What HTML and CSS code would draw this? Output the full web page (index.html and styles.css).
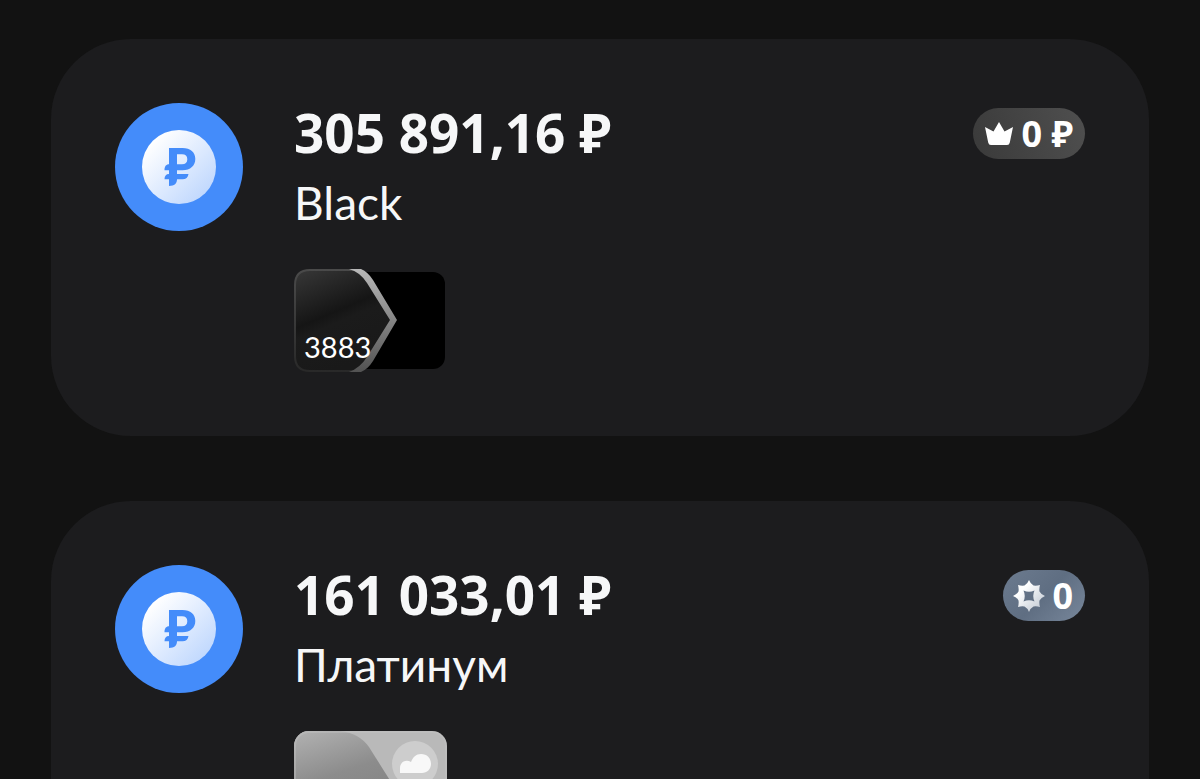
FILE: index.html
```
<!DOCTYPE html>
<html lang="ru">
<head>
    <meta charset="UTF-8">
    <meta name="viewport" content="width=device-width, initial-scale=1">
    <title>Счета</title>
    <link rel="stylesheet" href="styles.css">
</head>
<body>
    <main class="accounts">
        <!-- Black -->
        <section class="account">
            <svg class="account-icon" viewBox="0 0 128 128" aria-hidden="true">
                <defs>
                    <linearGradient id="coin" x1="0" y1="0" x2="1" y2="1">
                        <stop offset="0.15" stop-color="#ffffff"></stop>
                        <stop offset="1" stop-color="#b5d1fd"></stop>
                    </linearGradient>
                </defs>
                <circle cx="64" cy="64" r="64" fill="#448cfa"></circle>
                <circle cx="64" cy="64" r="37" fill="url(#coin)"></circle>
                <path fill="#448cfa" fill-rule="evenodd" d="M54 45H67.500C75.500 45 80.300 49.300 80.300 56C80.300 62.700 75.500 67.200 67.500 67.200H62V71H73.500C73 74.500 71 76.300 67.500 76.300H62C62 80.500 59.500 83 54 83V76.300H49.500C49.500 73 51 71 54 71V67.200H49.500C49.500 63.500 51 61.300 54 61.300ZM62 51.300V61.300H67C70.500 61.300 72.300 59.500 72.300 56.300C72.300 53 70.500 51.300 67 51.300Z"></path>
            </svg>
            <div class="account-info">
                <h2 class="amount">305 891,16 ₽</h2>
                <p class="name">Black</p>
                <div class="bank-card">
                    <svg viewBox="0 0 153 103" aria-hidden="true">
                        <defs>
                            <linearGradient id="black-face" x1="0" y1="0" x2="0.4" y2="1">
                                <stop offset="0" stop-color="#383838"></stop>
                                <stop offset="0.5" stop-color="#151515"></stop>
                                <stop offset="0.6" stop-color="#1b1b1b"></stop>
                                <stop offset="1" stop-color="#191919"></stop>
                            </linearGradient>
                            <linearGradient id="black-edge" x1="0" y1="0" x2="0" y2="1">
                                <stop offset="0" stop-color="#b8b8b8"></stop>
                                <stop offset="0.5" stop-color="#858585"></stop>
                                <stop offset="1" stop-color="#525252"></stop>
                            </linearGradient>
                            <linearGradient id="black-rim" x1="0" y1="0" x2="0" y2="1">
                                <stop offset="0" stop-color="#4a4a4a"></stop>
                                <stop offset="1" stop-color="#292929"></stop>
                            </linearGradient>
                        </defs>
                        <rect x="3" y="3" width="148" height="97" rx="12" fill="#000000"></rect>
                        <path fill="url(#black-face)" d="M16 1H58Q68 3 75 14L97 51L75 88Q68 100 58 102H16Q1 102 1 87V16Q1 1 16 1Z"></path>
                        <path fill="none" stroke="url(#black-rim)" stroke-width="2" d="M60 1H16Q1 1 1 16V87Q1 102 16 102H60"></path>
                        <path fill="url(#black-edge)" d="M55 0H67Q74 3 79 11L103 51L79 92Q74 100 67 103H55Q66 99 73 88L96 51L73 14Q66 3 55 0Z"></path>
                    </svg>
                    <span class="card-number">3883</span>
                </div>
            </div>
            <div class="badge badge-cashback">
                <svg class="badge-crown" viewBox="0 0 28 23" aria-hidden="true">
                    <path fill="#ffffff" d="M0 5L8.500 9.500L14 0L19.500 9.500L28 5L24.800 20.500Q24.300 23 22 23H6Q3.700 23 3.200 20.500Z"></path>
                </svg>
                <span>0 ₽</span>
            </div>
        </section>

        <!-- Platinum -->
        <section class="account">
            <svg class="account-icon" viewBox="0 0 128 128" aria-hidden="true">
                <circle cx="64" cy="64" r="64" fill="#448cfa"></circle>
                <circle cx="64" cy="64" r="37" fill="url(#coin)"></circle>
                <path fill="#448cfa" fill-rule="evenodd" d="M54 45H67.500C75.500 45 80.300 49.300 80.300 56C80.300 62.700 75.500 67.200 67.500 67.200H62V71H73.500C73 74.500 71 76.300 67.500 76.300H62C62 80.500 59.500 83 54 83V76.300H49.500C49.500 73 51 71 54 71V67.200H49.500C49.500 63.500 51 61.300 54 61.300ZM62 51.300V61.300H67C70.500 61.300 72.300 59.500 72.300 56.300C72.300 53 70.500 51.300 67 51.300Z"></path>
            </svg>
            <div class="account-info">
                <h2 class="amount">161 033,01 ₽</h2>
                <p class="name">Платинум</p>
                <div class="bank-card">
                    <svg viewBox="0 0 153 103" aria-hidden="true">
                        <defs>
                            <linearGradient id="platinum-face" x1="0" y1="0" x2="0.3" y2="1">
                                <stop offset="0" stop-color="#b2b2b2"></stop>
                                <stop offset="0.5" stop-color="#8c8c8c"></stop>
                                <stop offset="1" stop-color="#808080"></stop>
                            </linearGradient>
                            <clipPath id="platinum-shape">
                                <rect width="153" height="103" rx="15"></rect>
                            </clipPath>
                        </defs>
                        <g clip-path="url(#platinum-shape)">
                            <rect width="153" height="103" fill="#b9b9b9"></rect>
                            <path fill="url(#platinum-face)" d="M0 0H46Q65 2 75 16L97 51L75 87Q65 101 46 103H0Z"></path>
                        </g>
                        <rect x="1" y="1" width="151" height="101" rx="14" fill="none" stroke="#c4c4c4" stroke-opacity="0.4" stroke-width="2"></rect>
                        <circle cx="121" cy="33" r="23" fill="#cdcdcd"></circle>
                        <path fill="#f8f8f8" d="M106 42V37C106 31 112 28 117 31C119 26 122 23 127 23C133 23 137 27 137 33C137 38 133 42 128 42Z"></path>
                    </svg>
                </div>
            </div>
            <div class="badge badge-points">
                <svg class="badge-star" viewBox="0 0 32 32" aria-hidden="true">
                    <defs>
                        <linearGradient id="star" x1="0" y1="0" x2="1" y2="1">
                            <stop offset="0.3" stop-color="#ffffff"></stop>
                            <stop offset="1" stop-color="#b9c1cc"></stop>
                        </linearGradient>
                    </defs>
                    <path fill="url(#star)" fill-rule="evenodd" d="M16 0Q17.500 4 20.500 5.500Q23.500 6 27 5Q26 8.500 26.500 11.500Q28 14.500 32 16Q28 17.500 26.500 20.500Q26 23.500 27 27Q23.500 26 20.500 26.500Q17.500 28 16 32Q14.500 28 11.500 26.500Q8.500 26 5 27Q6 23.500 5.500 20.500Q4 17.500 0 16Q4 14.500 5.500 11.500Q6 8.500 5 5Q8.500 6 11.500 5.500Q14.500 4 16 0ZM10.500 10.500Q13 16 10.500 21.500Q16 19 21.500 21.500Q19 16 21.500 10.500Q16 13 10.500 10.500Z"></path>
                </svg>
                <span>0</span>
            </div>
        </section>
    </main>
</body>
</html>
```
FILE: styles.css
```
/* General Styles */
* {
    box-sizing: border-box;
}

body {
    margin: 0;
    height: 100vh;
    overflow: hidden;
    background-color: #121212;
    color: #f6f7f8;
    font-family: Lato, "Noto Sans", sans-serif;
}

.accounts {
    display: flex;
    flex-direction: column;
    gap: 65px;
    padding: 39px 51px;
}

/* Account */
.account {
    display: flex;
    align-items: flex-start;
    padding: 64px;
    border-radius: 80px;
    background-color: #1c1c1e;
}

.account-icon {
    flex: none;
    width: 128px;
    height: 128px;
}

.account-info {
    flex: 1;
    margin-left: 51px;
}

.amount {
    margin: 0;
    font-family: "Noto Sans", sans-serif;
    font-size: 53px;
    line-height: 60px;
    font-weight: 700;
}

.name {
    margin: 8px 0 34px;
    font-size: 46px;
    line-height: 64px;
}

/* Bank Card */
.bank-card {
    position: relative;
    width: 153px;
}

.bank-card svg {
    display: block;
    width: 100%;
}

.card-number {
    position: absolute;
    left: 10px;
    bottom: 9px;
    color: #fff;
    font-size: 29px;
    line-height: 32px;
}

/* Badges */
.badge {
    display: flex;
    align-items: center;
    gap: 8px;
    height: 51px;
    margin-top: 5px;
    padding: 0 12px;
    border-radius: 26px;
    color: #fff;
    font-family: "Noto Sans", sans-serif;
    font-size: 36px;
    line-height: 50px;
    font-weight: 700;
}

.badge-cashback {
    background: linear-gradient(70deg, #3a3a3a, #4f4f4f);
}

.badge-points {
    gap: 7px;
    padding: 0 12px 0 10px;
    background: linear-gradient(135deg, #6c7b8f, #5f6e82 50%, #78879b);
}

.badge-crown {
    width: 28px;
    height: 23px;
}

.badge-star {
    width: 32px;
    height: 32px;
}
```
